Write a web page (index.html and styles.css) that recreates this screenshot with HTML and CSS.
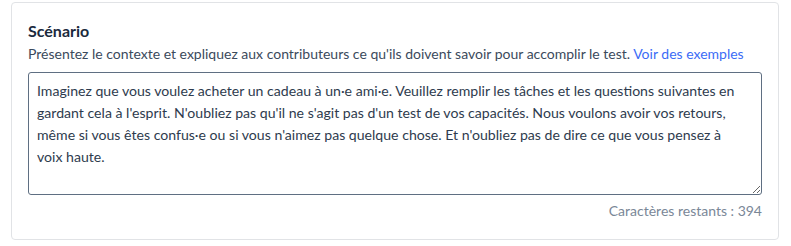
FILE: index.html
```html
<!DOCTYPE html>
<html lang="fr">
<head>
<meta charset="utf-8">
<link rel="stylesheet" href="styles.css">
</head>
<body>
<div class="card">
  <h2 class="title">Scénario</h2>
  <p class="desc">Présentez le contexte et expliquez aux contributeurs ce qu'ils doivent savoir pour accomplir le test. <a class="link" href="#">Voir des exemples</a></p>
  <textarea class="field">Imaginez que vous voulez acheter un cadeau à un·e ami·e. Veuillez remplir les tâches et les questions suivantes en gardant cela à l'esprit. N'oubliez pas qu'il ne s'agit pas d'un test de vos capacités. Nous voulons avoir vos retours, même si vous êtes confus·e ou si vous n'aimez pas quelque chose. Et n'oubliez pas de dire ce que vous pensez à voix haute.</textarea>
  <div class="counter">Caractères restants : 394</div>
</div>
</body>
</html>
```

FILE: styles.css
```css
html, body {
  margin: 0;
  padding: 0;
  background: #ffffff;
}
body {
  padding: 2px 12px 0 11px;
  font-family: "Lato", "Liberation Sans", sans-serif;
  color: #2e3b4e;
}
.card {
  box-sizing: border-box;
  width: 768px;
  height: 238px;
  border: 1px solid #e1e3e6;
  border-radius: 4px;
  padding: 18px 16px 0 16px;
  display: flex;
  flex-direction: column;
}
.title {
  margin: 0;
  font-size: 16px;
  line-height: 20px;
  font-weight: 700;
  color: #1b2a3d;
}
.desc {
  margin: 3px 0 0 0;
  font-size: 14px;
  line-height: 20px;
  color: #3b4a5c;
}
.link {
  color: #3b6cf6;
  text-decoration: none;
}
.field {
  box-sizing: border-box;
  margin: 8px 0 0 0;
  width: 734px;
  height: 123px;
  border: 1px solid #5f6f82;
  border-radius: 3px;
  padding: 7px 16px 8px 8px;
  font-family: "Lato", "Liberation Sans", sans-serif;
  font-size: 14.1px;
  line-height: 22px;
  color: #2e3b4e;
  resize: vertical;
  outline: none;
}
.counter {
  margin-top: 6px;
  width: 734px;
  text-align: right;
  font-size: 14px;
  line-height: 20px;
  color: #7a8797;
}
```
